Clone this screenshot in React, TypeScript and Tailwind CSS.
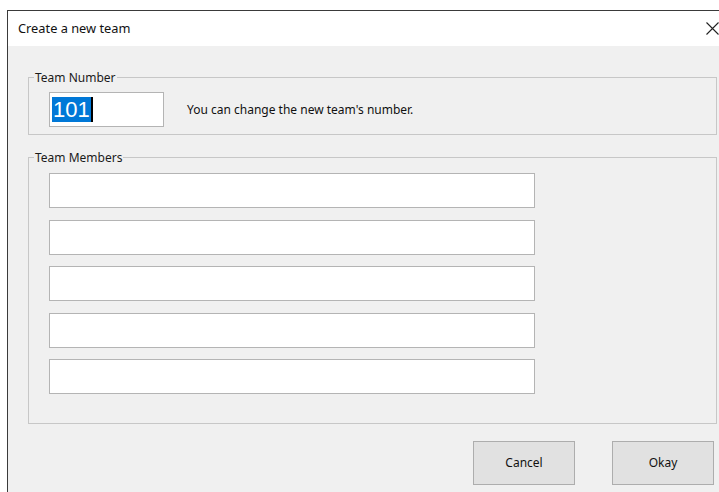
import { useState } from "react";

type TGroupProps = {
  title: string;
  className?: string;
  children: React.ReactNode;
};

// win32-style group box: fieldset with the caption sitting on the top edge
function GroupBox({ title, className, children }: TGroupProps) {
  return (
    <fieldset className={`border border-[#c7c7c7] ${className ?? ""}`}>
      <legend className="ml-[-15px] px-[1px] text-[12px] leading-[15px] text-[#1a1a1a]">
        {title}
      </legend>
      {children}
    </fieldset>
  );
}

function MemberInput() {
  return (
    <input
      type="text"
      className="h-[35px] w-[486px] border border-[#b4b4b4] bg-white px-1 text-[13px] outline-none"
    />
  );
}

export default function App() {
  const [members] = useState(["", "", "", "", ""]);

  return (
    <div className="h-[492px] w-[719px] overflow-hidden bg-white pt-[10px] font-['Segoe_UI','Noto_Sans','Liberation_Sans',sans-serif]">
      <div className="flex h-full flex-col border-t border-l border-[#3a3a3a] ml-[7px]">
        {/* title bar */}
        <div className="flex h-[35px] shrink-0 items-center justify-between bg-white pl-[10px] pr-[1px]">
          <span className="text-[12.8px] text-[#111]">Create a new team</span>
          <svg width="13" height="13" viewBox="0 0 13 13" className="mr-[-1px]">
            <path d="M0.5 0.5 L12.5 12.5 M12.5 0.5 L0.5 12.5" stroke="#222" strokeWidth="1.1" />
          </svg>
        </div>

        <div className="flex flex-1 flex-col bg-[#f0f0f0] pl-[20px] pr-[2px] pt-[24px]">
          <GroupBox title="Team Number" className="px-[20px] pb-[7px] pt-[7px]">
            <div className="flex items-center">
              <div className="flex h-[35px] w-[115px] items-center border border-[#b4b4b4] bg-white pl-[2px]">
                <span className="bg-[#0078d7] px-[1px] font-['Liberation_Sans',sans-serif] text-[22px] leading-[25px] text-white">
                  101
                </span>
                <span className="h-[25px] w-[2px] bg-black" />
              </div>
              <span className="ml-[23px] text-[12px] text-[#111]">
                You can change the new team's number.
              </span>
            </div>
          </GroupBox>

          <GroupBox title="Team Members" className="mt-[15px] px-[20px] pb-[29px] pt-[8px]">
            <div className="flex flex-col gap-[11.5px]">
              {members.map((_, i) => (
                <MemberInput key={i} />
              ))}
            </div>
          </GroupBox>

          <div className="mt-[17px] flex justify-end gap-[37px] pr-[3px]">
            <button className="h-[44px] w-[102px] border border-[#adadad] bg-[#e1e1e1] text-[12px] text-[#111]">
              Cancel
            </button>
            <button className="h-[44px] w-[102px] border border-[#adadad] bg-[#e1e1e1] text-[12px] text-[#111]">
              Okay
            </button>
          </div>
        </div>
      </div>
    </div>
  );
}
